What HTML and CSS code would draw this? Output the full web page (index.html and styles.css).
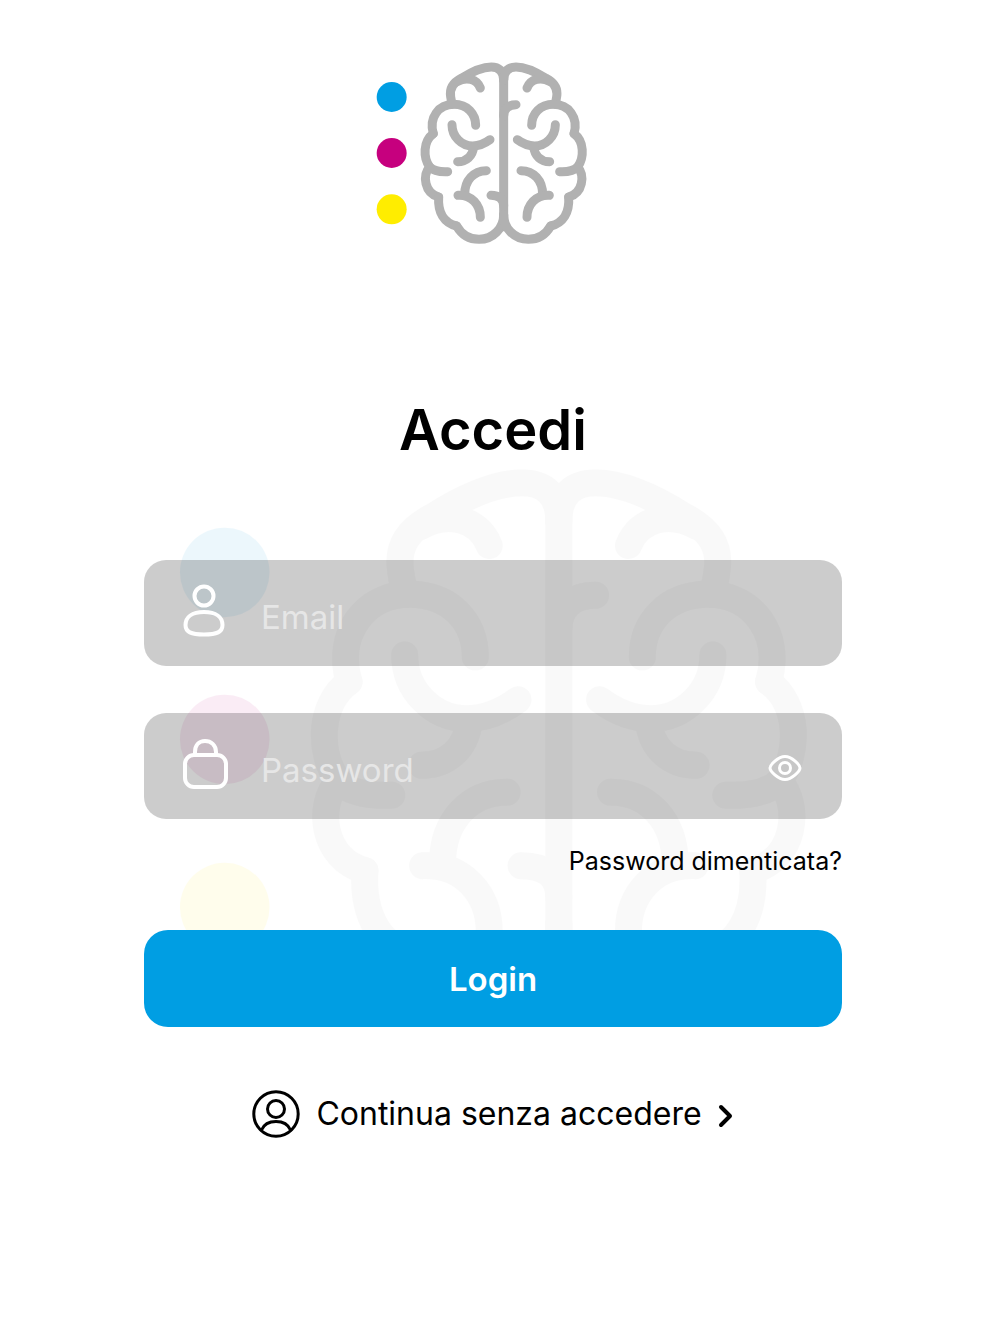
FILE: index.html
```
<!DOCTYPE html>
<html lang="it">
<head>
     <meta charset="UTF-8">
     <meta name="viewport" content="width=device-width, initial-scale=1.0">
     <title>Accedi</title>
     <link rel="stylesheet" href="styles.css">
</head>
<body>
     <svg class="defs" aria-hidden="true">
          <symbol id="brain-half" viewBox="0 0 720 615" overflow="visible">
               <path d="M431 90 C431 62 416 51 394 51 C366 51 334 66 304 85 C279 98 268 116 272 140 C273 149 275 157 278 163"/>
               <path d="M292 95 C318 80 350 86 361 114"/>
               <path d="M220 251 C206 203 236 163 281 163 C323 163 347 192 347 226"/>
               <path d="M220 251 C189 274 189 322 209 351 C220 362 240 366 263 365"/>
               <path d="M209 351 C187 376 193 429 236 441"/>
               <path d="M236 441 C233 487 252 519 290 528"/>
               <path d="M290 528 C307 558 334 568 357 568 C400 568 431 534 431 494"/>
               <path d="M276 224 C276 260 305 288 338 288 C358 288 374 281 390 269"/>
               <path d="M341 290 C338 319 318 335 293 335"/>
               <path d="M379 362 C341 362 314 391 314 434"/>
               <path d="M294 436 C335 434 361 465 361 502"/>
          </symbol>
          <symbol id="logo" viewBox="48 36 702 546">
               <circle cx="95" cy="141" r="45" fill="#009ee3"/>
               <circle cx="95" cy="309" r="45" fill="#c6007e"/>
               <circle cx="95" cy="478" r="45" fill="#ffed00"/>
               <g fill="none" stroke="#b1b1b1" stroke-width="27" stroke-linecap="round">
                    <path d="M431 72 V530"/>
                    <use href="#brain-half" width="720" height="615"/>
                    <use href="#brain-half" width="720" height="615" transform="translate(862 0) scale(-1 1)"/>
                    <path d="M393 436 C417 436 431 446 431 468"/>
                    <path d="M468 164 C445 164 431 176 431 198"/>
               </g>
          </symbol>
     </svg>

     <main class="login">
          <svg class="logo" viewBox="0 0 702 546" role="img" aria-label="Logo"><use href="#logo"/></svg>
          <h1>Accedi</h1>

          <form class="login-form">
               <svg class="watermark" viewBox="0 0 702 546" aria-hidden="true"><use href="#logo"/></svg>

               <div class="field">
                    <label for="email" aria-label="Email">
                         <svg class="field-icon" viewBox="0 0 46 58">
                              <circle cx="21" cy="12" r="9.5"/>
                              <path d="M21 28 C33 28 39.500 33 39.500 41 C39.500 48 34 50.500 21 50.500 C8 50.500 2.500 48 2.500 41 C2.500 33 9 28 21 28 Z"/>
                         </svg>
                    </label>
                    <input type="email" id="email" placeholder="Email">
               </div>

               <div class="field">
                    <label for="password" aria-label="Password">
                         <svg class="field-icon" viewBox="0 0 46 58">
                              <path d="M12 18 V15 C12 8 16 4 22 4 C28 4 33 8 33 15 V18"/>
                              <rect x="2" y="18" width="41" height="32" rx="9"/>
                         </svg>
                    </label>
                    <input type="password" id="password" placeholder="Password">
                    <button type="button" class="eye" aria-label="Mostra password">
                         <svg viewBox="0 0 34 28">
                              <path d="M2 14 C2 11 10 2.500 17 2.500 C24 2.500 32 11 32 14 C32 17 24 25.500 17 25.500 C10 25.500 2 17 2 14 Z"/>
                              <circle cx="17" cy="14" r="5.500"/>
                         </svg>
                    </button>
               </div>

               <a class="forgot" href="#">Password dimenticata?</a>
               <button type="submit" class="login-btn">Login</button>
          </form>

          <a class="guest" href="#">
               <svg class="guest-icon" viewBox="0 0 48 48">
                    <circle cx="24" cy="24" r="22.200"/>
                    <circle cx="24" cy="19" r="8.500"/>
                    <path d="M9.500 40 C12 34 17 31.500 24 31.500 C31 31.500 36 34 38.500 40"/>
               </svg>
               <span>Continua senza accedere</span>
               <svg class="chevron" viewBox="0 0 16 24"><path d="M3 5 L12 14 L3 23"/></svg>
          </a>
     </main>
</body>
</html>
```
FILE: styles.css
```
*{
     padding: 0;
     margin: 0;
     box-sizing: border-box;
     font-family: Inter, 'Liberation Sans', sans-serif;
}
body{
     background: #fff;
     color: #000;
}
svg{
     display: block;
     overflow: visible;
     fill: none;
     stroke-linecap: round;
     stroke-linejoin: round;
}
a{
     color: inherit;
     text-decoration: none;
}
.defs{
     position: absolute;
     width: 0;
     height: 0;
}

.login{
     display: flex;
     flex-direction: column;
     align-items: center;
     padding: 62px 158px 62px 144px;
}
.logo{
     width: 234px;
}
h1{
     margin: 150px 0 94px;
     font-size: 56px;
     font-weight: 600;
     line-height: 72px;
}

/* form */
.login-form{
     position: relative;
     width: 100%;
     display: flex;
     flex-direction: column;
}
/* big faded logo behind the fields */
.watermark{
     position: absolute;
     z-index: -1;
     top: -92px;
     left: 34px;
     width: 100%;
     opacity: .07;
}
.field{
     display: flex;
     align-items: center;
     height: 106px;
     margin-bottom: 47px;
     padding: 0 40px 0 39px;
     border-radius: 22px;
     background: rgba(0,0,0,.2);
}
.field-icon{
     width: 46px;
     height: 58px;
     stroke: #fff;
     stroke-width: 4;
}
.field input{
     flex: 1;
     min-width: 0;
     height: 100%;
     margin-left: 32px;
     padding-top: 8px;
     border: none;
     outline: none;
     background: none;
     color: #fff;
     font-size: 33px;
}
.field input::placeholder{
     color: #e6e6e6;
     opacity: 1;
}
.eye{
     padding-top: 4px;
     border: none;
     background: none;
     cursor: pointer;
}
.eye svg{
     width: 34px;
     height: 28px;
     stroke: #fff;
     stroke-width: 3;
}
.forgot{
     align-self: flex-end;
     margin-top: -21px;
     font-size: 25px;
     line-height: 32px;
}
.login-btn{
     height: 97px;
     margin-top: 53px;
     border: none;
     border-radius: 24px;
     background: #009ee3;
     color: #fff;
     font-size: 33px;
     font-weight: 600;
     cursor: pointer;
}

.guest{
     display: flex;
     align-items: center;
     margin-top: 63px;
     font-size: 32px;
     line-height: 40px;
}
.guest-icon{
     width: 48px;
     height: 48px;
     margin-right: 16px;
     stroke: #000;
     stroke-width: 3;
}
.chevron{
     width: 16px;
     height: 24px;
     margin-left: 16px;
     stroke: #000;
     stroke-width: 4;
}
```
